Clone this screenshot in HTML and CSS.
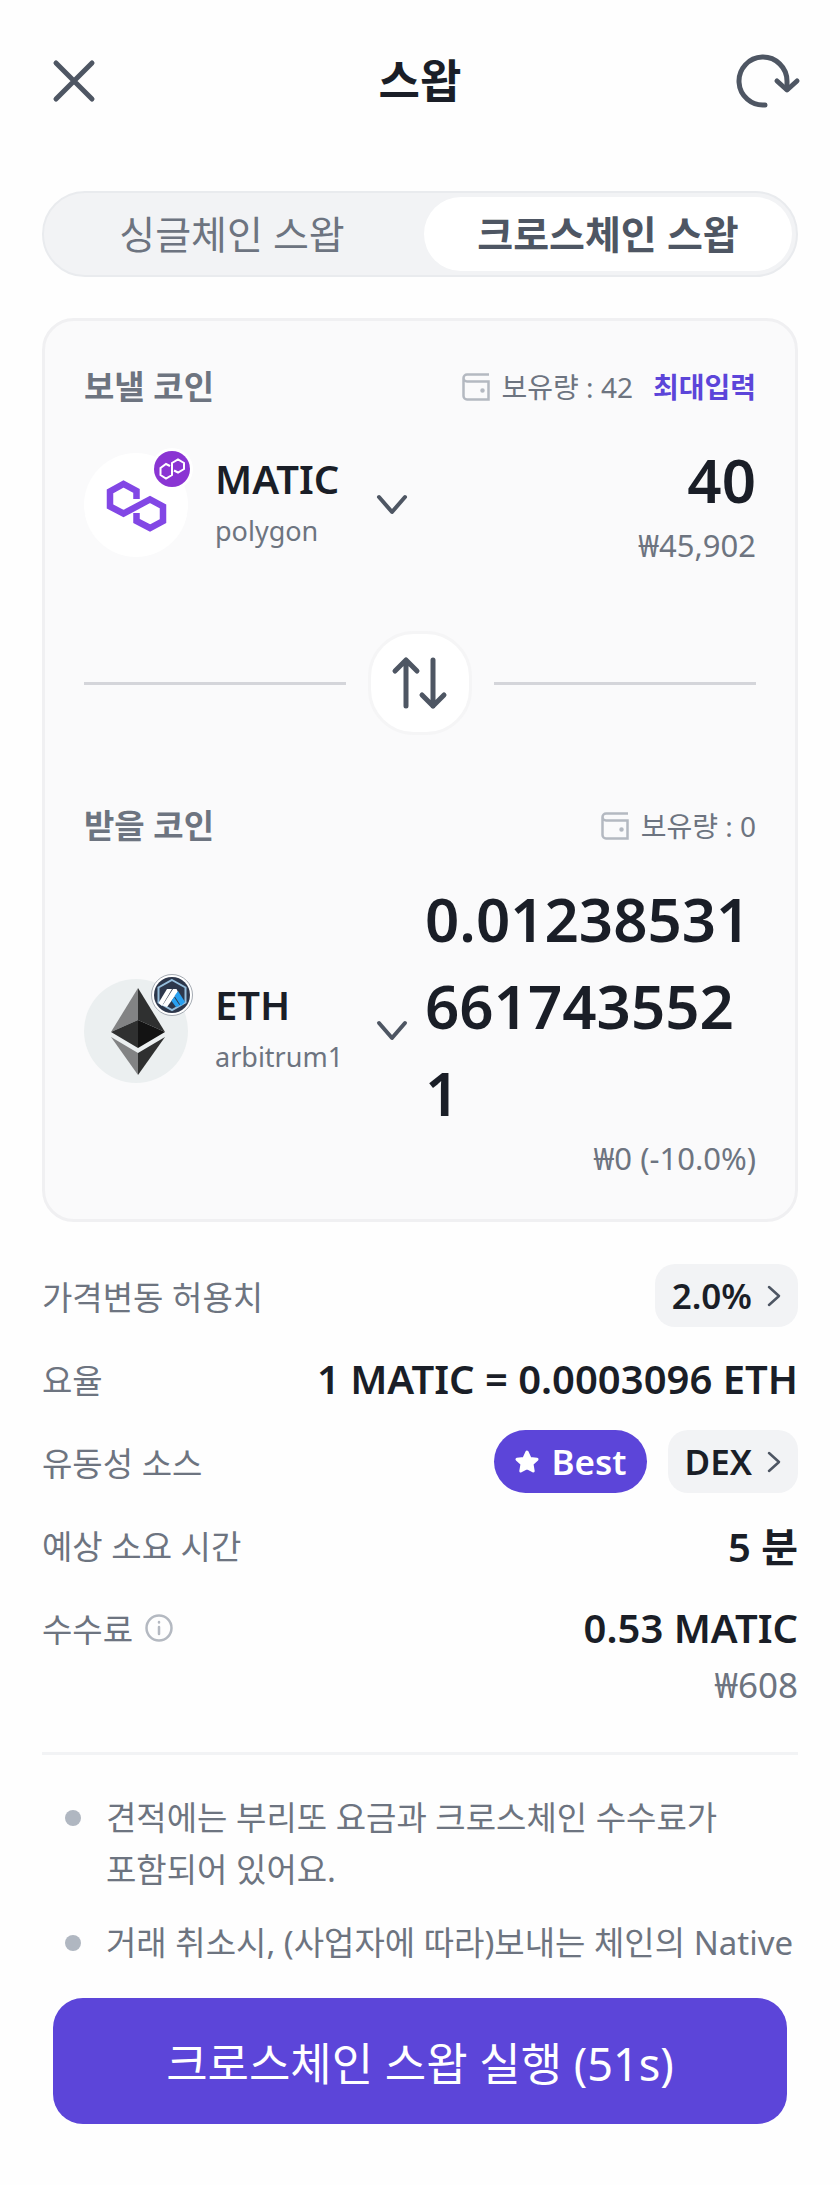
FILE: index.html
```html
<!DOCTYPE html>
<html lang="ko">

<head>
    <meta charset="UTF-8">
    <meta name="viewport" content="width=device-width, initial-scale=1.0">
    <title>스왑</title>
    <link rel="stylesheet" href="styles.css">
</head>

<body>
    <header class="top-bar">
        <button class="icon-btn" type="button" aria-label="닫기">
            <svg width="64" height="64" viewBox="0 0 64 64" fill="none" stroke="#4e5663" stroke-width="5" stroke-linecap="round">
                <path d="M14 14L50 50M50 14L14 50" />
            </svg>
        </button>
        <h1>스왑</h1>
        <button class="icon-btn" type="button" aria-label="새로고침">
            <svg width="64" height="64" viewBox="0 0 64 64" fill="none" stroke="#4e5663" stroke-width="5" stroke-linecap="round" stroke-linejoin="round">
                <path d="M31 56A24 24 0 1 1 53 32V40" />
                <path d="M43 32L53 41L63 32" />
            </svg>
        </button>
    </header>

    <main>
        <div class="tabs">
            <button class="tab" type="button">싱글체인 스왑</button>
            <button class="tab active" type="button">크로스체인 스왑</button>
        </div>

        <section class="swap-card">
            <div class="card-head">
                <h2>보낼 코인</h2>
                <div class="balance">
                    <svg class="wallet" width="28" height="28" viewBox="0 0 28 28" fill="none" stroke="#b4b9c1" stroke-width="2.500">
                        <path d="M27 1.500H5A3.500 3.500 0 0 0 5 8.500H26.500V26.500H5A3.500 3.500 0 0 1 1.500 23V5" />
                        <circle cx="20.500" cy="17.500" r="1" fill="#b4b9c1" />
                    </svg>
                    <span>보유량 : 42</span>
                    <button class="max-btn" type="button">최대입력</button>
                </div>
            </div>
            <div class="coin-row">
                <button class="coin" type="button">
                    <span class="coin-icon">
                        <svg width="104" height="104" viewBox="0 0 104 104">
                            <circle cx="52" cy="52" r="52" fill="#fff" />
                            <path d="M52.500 46V38L39.500 31L26 38.500V53.500L39.500 60.500L66 46.500L79 53.500V68L66 75L52.500 68V60" fill="none" stroke="#8247e5" stroke-width="6.500" />
                        </svg>
                        <svg class="badge" width="42" height="42" viewBox="0 0 42 42">
                            <circle cx="21" cy="21" r="21" fill="#fff" />
                            <circle cx="21" cy="21" r="18" fill="#8a35d3" />
                            <path d="M19 18L15 16L9.500 20V27L15 30.500L21 27V15L27 11.500L33 15V21L27 24.500L23 22.500" fill="none" stroke="#fff" stroke-width="2" />
                        </svg>
                    </span>
                    <span class="coin-name">
                        <strong>MATIC</strong>
                        <small>polygon</small>
                    </span>
                    <svg class="chevron" width="30" height="20" viewBox="0 0 30 20" fill="none" stroke="#4e5663" stroke-width="4" stroke-linecap="round" stroke-linejoin="round">
                        <path d="M2 2L15 17L28 2" />
                    </svg>
                </button>
                <div class="amount">
                    <p class="amount-value">40</p>
                    <p class="amount-krw">₩45,902</p>
                </div>
            </div>

            <div class="switch-row">
                <button class="switch-btn" type="button" aria-label="방향 전환">
                    <svg width="58" height="52" viewBox="0 0 58 52" fill="none" stroke="#4e5663" stroke-width="5" stroke-linecap="round" stroke-linejoin="round">
                        <path d="M15 49V3M4 14L15 3L26 14" />
                        <path d="M42 3V49M31 38L42 49L53 38" />
                    </svg>
                </button>
            </div>

            <div class="card-head">
                <h2>받을 코인</h2>
                <div class="balance">
                    <svg class="wallet" width="28" height="28" viewBox="0 0 28 28" fill="none" stroke="#b4b9c1" stroke-width="2.500">
                        <path d="M27 1.500H5A3.500 3.500 0 0 0 5 8.500H26.500V26.500H5A3.500 3.500 0 0 1 1.500 23V5" />
                        <circle cx="20.500" cy="17.500" r="1" fill="#b4b9c1" />
                    </svg>
                    <span>보유량 : 0</span>
                </div>
            </div>
            <div class="coin-row">
                <button class="coin" type="button">
                    <span class="coin-icon">
                        <svg width="104" height="104" viewBox="0 0 104 104">
                            <circle cx="52" cy="52" r="52" fill="#ebeff0" />
                            <path d="M54 9L27 53L54 41Z" fill="#828384" />
                            <path d="M54 9L81 53L54 41Z" fill="#2f3030" />
                            <path d="M27 53L54 41V69Z" fill="#2f3030" />
                            <path d="M81 53L54 41V69Z" fill="#131313" />
                            <path d="M27 58L54 74V96Z" fill="#828384" />
                            <path d="M81 58L54 74V96Z" fill="#2f3030" />
                        </svg>
                        <svg class="badge" width="42" height="42" viewBox="0 0 42 42">
                            <circle cx="21" cy="21" r="20.500" fill="#fff" stroke="#a5abb3" stroke-width="1" />
                            <circle cx="21" cy="21" r="18" fill="#2d374b" />
                            <path d="M21 6L34.500 13.500V28.500L21 36L7.500 28.500V13.500Z" fill="none" stroke="#96bedc" stroke-width="2" />
                            <path d="M16 15H21L11 32L7.500 29Z" fill="#fff" />
                            <path d="M22 15H25.500L27 18L16 33L11.500 31.500Z" fill="#fff" />
                            <path d="M27 17L34 28L30 32L23.500 22Z" fill="#28a0f0" />
                            <path d="M23 23L29 32L25 33L20.500 27Z" fill="#28a0f0" />
                        </svg>
                    </span>
                    <span class="coin-name">
                        <strong>ETH</strong>
                        <small>arbitrum1</small>
                    </span>
                    <svg class="chevron" width="30" height="20" viewBox="0 0 30 20" fill="none" stroke="#4e5663" stroke-width="4" stroke-linecap="round" stroke-linejoin="round">
                        <path d="M2 2L15 17L28 2" />
                    </svg>
                </button>
                <div class="amount">
                    <p class="amount-value long">0.012385316617435521</p>
                    <p class="amount-krw">₩0 (-10.0%)</p>
                </div>
            </div>
        </section>

        <dl class="details">
            <div class="detail">
                <dt>가격변동 허용치</dt>
                <dd>
                    <button class="pill" type="button">2.0%
                        <svg width="14" height="20" viewBox="0 0 14 20" fill="none" stroke="#4e5663" stroke-width="2.500" stroke-linecap="round" stroke-linejoin="round">
                            <path d="M2 1L12 10L2 19" />
                        </svg>
                    </button>
                </dd>
            </div>
            <div class="detail">
                <dt>요율</dt>
                <dd>1 MATIC = 0.0003096 ETH</dd>
            </div>
            <div class="detail">
                <dt>유동성 소스</dt>
                <dd>
                    <span class="best">
                        <svg width="26" height="26" viewBox="0 0 26 26" fill="#fff" stroke="#fff" stroke-width="3" stroke-linejoin="round">
                            <path d="M13 3L16 9.500L23 10.300L18 15L19.200 22L13 18.700L6.800 22L8 15L3 10.300L10 9.500Z" />
                        </svg>
                        Best
                    </span>
                    <button class="pill" type="button">DEX
                        <svg width="14" height="20" viewBox="0 0 14 20" fill="none" stroke="#4e5663" stroke-width="2.500" stroke-linecap="round" stroke-linejoin="round">
                            <path d="M2 1L12 10L2 19" />
                        </svg>
                    </button>
                </dd>
            </div>
            <div class="detail">
                <dt>예상 소요 시간</dt>
                <dd>5 분</dd>
            </div>
            <div class="detail">
                <dt>수수료
                    <svg width="28" height="28" viewBox="0 0 28 28" fill="none" stroke="#b4b9c1" stroke-width="2.500" stroke-linecap="round">
                        <circle cx="14" cy="14" r="12.500" />
                        <path d="M14 13V20M14 8V8.500" />
                    </svg>
                </dt>
                <dd>0.53 MATIC</dd>
            </div>
        </dl>
        <p class="fee-krw">₩608</p>

        <ul class="notes">
            <li>견적에는 부리또 요금과 크로스체인 수수료가 포함되어 있어요.</li>
            <li>거래 취소시, (사업자에 따라)보내는 체인의 Native</li>
        </ul>
    </main>

    <footer class="bottom-bar">
        <button class="submit-btn" type="button">크로스체인 스왑 실행 (51s)</button>
    </footer>
</body>

</html>
```

FILE: styles.css
```css
/* General Styling */
* {
    box-sizing: border-box;
}

body {
    margin: 0;
    background: #fefefe;
    color: #1a1e27;
    font-family: "Noto Sans", "Noto Sans CJK KR", sans-serif;
    word-break: keep-all;
}

h1,
h2,
p,
dl,
dd,
ul {
    margin: 0;
    padding: 0;
}

button {
    padding: 0;
    border: none;
    background: none;
    color: inherit;
    font: inherit;
    cursor: pointer;
}

svg {
    display: block;
    flex: none;
    overflow: visible;
}

main {
    padding: 0 42px;
}

/* Top bar */
.top-bar {
    display: flex;
    justify-content: space-between;
    align-items: center;
    height: 162px;
    padding: 0 42px;
}

.top-bar h1 {
    font-size: 45px;
    line-height: 64px;
}

/* Tabs */
.tabs {
    display: flex;
    gap: 8px;
    height: 86px;
    margin-top: 29px;
    padding: 4px;
    border: 2px solid #e9ebee;
    border-radius: 43px;
    background: #f2f3f5;
}

.tab {
    flex: 1;
    border-radius: 38px;
    color: #6d7480;
    font-size: 39px;
    line-height: 56px;
}

.tab.active {
    background: #fff;
    color: #4e5663;
    font-weight: 600;
}

/* Swap card */
.swap-card {
    margin-top: 41px;
    padding: 40px 39px;
    border: 3px solid #f0f0f2;
    border-radius: 32px;
    background: #fafafb;
}

.card-head {
    display: flex;
    justify-content: space-between;
    align-items: center;
    height: 52px;
}

.card-head h2 {
    color: #6d7480;
    font-size: 33px;
    line-height: 48px;
}

.balance {
    display: flex;
    align-items: center;
    color: #6d7480;
    font-size: 28px;
    line-height: 40px;
}

.wallet {
    margin-right: 12px;
}

.max-btn {
    margin-left: 20px;
    color: #5c45d9;
    font-weight: 600;
}

.coin-row {
    display: flex;
    justify-content: space-between;
    align-items: center;
    margin-top: 24px;
}

.coin {
    display: flex;
    align-items: center;
    width: 323px;
    padding-top: 6px;
    text-align: left;
}

.coin-icon {
    position: relative;
}

.badge {
    position: absolute;
    top: -5px;
    right: -5px;
}

.coin-name {
    flex: 1;
    margin-left: 27px;
}

.coin-name strong,
.coin-name small {
    display: block;
    line-height: 52px;
}

.coin-name strong {
    font-size: 40px;
    font-weight: 600;
}

.coin-name small {
    color: #6d7480;
    font-size: 27px;
}

.amount {
    width: 331px;
    text-align: right;
}

.amount-value {
    font-size: 60px;
    font-weight: 600;
    line-height: 87px;
}

.amount-value.long {
    text-align: left;
    word-break: break-all;
}

.amount-krw {
    color: #6d7480;
    font-size: 31px;
    line-height: 42px;
}

.switch-row {
    display: flex;
    align-items: center;
    gap: 22px;
    margin: 65px 0;
}

.switch-row::before,
.switch-row::after {
    content: "";
    flex: 1;
    height: 3px;
    background: #d4d5da;
}

.switch-btn {
    display: flex;
    justify-content: center;
    align-items: center;
    width: 104px;
    height: 104px;
    border: 3px solid #f5f5f6;
    border-radius: 46px;
    background: #fff;
}

/* Details */
.details {
    margin-top: 32px;
}

.detail {
    display: flex;
    justify-content: space-between;
    align-items: center;
    height: 83px;
}

.detail dt,
.detail dd {
    display: flex;
    align-items: center;
}

.detail dt {
    gap: 12px;
    color: #6d7480;
    font-size: 33px;
}

.detail dd {
    gap: 21px;
    font-size: 40px;
    font-weight: 600;
}

.pill,
.best {
    display: flex;
    align-items: center;
    height: 63px;
    padding: 0 17px;
    border-radius: 20px;
    background: #f2f3f5;
    font-size: 35px;
    gap: 15px;
}

.best {
    padding: 0 20px;
    border-radius: 32px;
    background: #5c45d9;
    color: #fff;
    gap: 12px;
}

.fee-krw {
    color: #6d7480;
    font-size: 35px;
    line-height: 32px;
    text-align: right;
}

/* Notes */
.notes {
    margin-top: 51px;
    padding: 37px 0 0 64px;
    border-top: 3px solid #f2f3f5;
    color: #6d7480;
    font-size: 33px;
    line-height: 52px;
    list-style: none;
}

.notes li {
    position: relative;
    margin-bottom: 21px;
}

.notes li::before {
    content: "";
    position: absolute;
    top: 18px;
    left: -41px;
    width: 16px;
    height: 16px;
    border-radius: 50%;
    background: #b0b7c1;
}

/* Bottom button */
.bottom-bar {
    padding: 8px 53px 61px;
}

.submit-btn {
    width: 100%;
    height: 126px;
    border-radius: 30px;
    background: #5c45d9;
    color: #fff;
    font-size: 45px;
}
```
